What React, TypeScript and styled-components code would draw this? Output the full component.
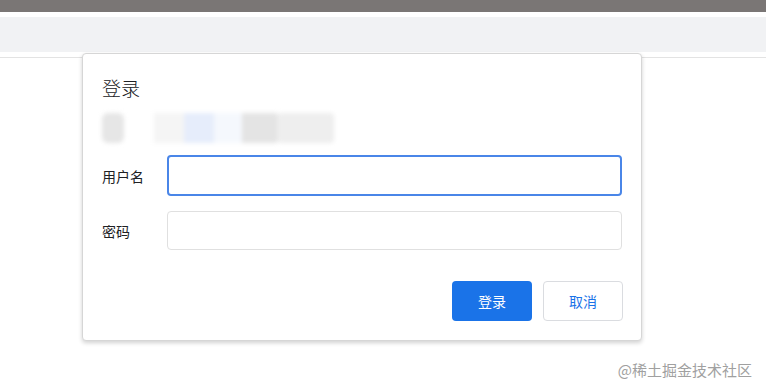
import React from "react";
import styled, { createGlobalStyle } from "styled-components";

const Global = createGlobalStyle`
  html, body { margin: 0; padding: 0; background: #fff; }
  body { font-family: "Microsoft YaHei", "Noto Sans CJK SC", "Liberation Sans", sans-serif; }
`;

const Page = styled.div`
  position: relative;
  width: 766px;
  height: 392px;
  overflow: hidden;
  background: #fff;
`;

const TopBar = styled.div`
  height: 12px;
  background: #7a7675;
`;

const Spacer = styled.div<{ h: number }>`
  height: ${(p) => p.h}px;
`;

const Band = styled.div`
  height: 35px;
  background: #f1f2f4;
`;

const Rule = styled.div`
  height: 1px;
  margin-top: 5px;
  background: #e3e3e3;
`;

const Dialog = styled.div`
  position: absolute;
  left: 82px;
  top: 53px;
  width: 560px;
  height: 288px;
  box-sizing: border-box;
  background: #fff;
  border-radius: 4px;
  border: 1px solid #d6d6d6;
  box-shadow: 0 2px 4px rgba(0, 0, 0, 0.18);
  padding: 22px 19px 0 19px;
  display: flex;
  flex-direction: column;
`;

const Title = styled.div`
  font-size: 19px;
  font-weight: 300;
  line-height: 24px;
  color: #202124;
`;

const BlurRow = styled.div`
  display: flex;
  height: 30px;
  margin-top: 13px;
  filter: blur(2px);
`;

const Blob = styled.div<{ w: number; c: string; r?: number }>`
  width: ${(p) => p.w}px;
  background: ${(p) => p.c};
  border-radius: ${(p) => p.r ?? 0}px;
`;

const Row = styled.div<{ mt: number }>`
  display: flex;
  align-items: center;
  margin-top: ${(p) => p.mt}px;
`;

const Label = styled.div`
  width: 65px;
  font-size: 14px;
  color: #202124;
`;

const Input = styled.div<{ focused?: boolean }>`
  width: 456px;
  height: ${(p) => (p.focused ? 41 : 39)}px;
  box-sizing: border-box;
  border-radius: 4px;
  border: ${(p) => (p.focused ? "2px solid #4a86e8" : "1px solid #e0e0e0")};
  background: #fff;
`;

const Actions = styled.div`
  display: flex;
  justify-content: flex-end;
  gap: 11px;
  margin-top: 31px;
  width: 521px;
`;

const Button = styled.div<{ primary?: boolean }>`
  width: 80px;
  height: 40px;
  box-sizing: border-box;
  border-radius: 4px;
  display: flex;
  align-items: center;
  justify-content: center;
  font-size: 14px;
  background: ${(p) => (p.primary ? "#1a73e8" : "#fff")};
  color: ${(p) => (p.primary ? "#fff" : "#1a73e8")};
  border: ${(p) => (p.primary ? "none" : "1px solid #dadce0")};
`;

const Watermark = styled.div`
  position: absolute;
  right: 14px;
  top: 360px;
  font-size: 15px;
  line-height: 20px;
  color: #a0a0a0;
`;

export default function App() {
  return (
    <Page>
      <Global />
      <TopBar />
      <Spacer h={5} />
      <Band />
      <Rule />
      <Dialog>
        <Title>登录</Title>
        <BlurRow>
          <Blob w={22} c="#e6e6e6" r={6} />
          <Blob w={30} c="#ffffff" />
          <Blob w={30} c="#f5f5f5" />
          <Blob w={30} c="#e6edfb" />
          <Blob w={28} c="#f5f8fd" />
          <Blob w={35} c="#e4e4e4" />
          <Blob w={57} c="#eeeeee" r={4} />
        </BlurRow>
        <Row mt={12}>
          <Label>用户名</Label>
          <Input focused />
        </Row>
        <Row mt={15}>
          <Label>密码</Label>
          <Input />
        </Row>
        <Actions>
          <Button primary>登录</Button>
          <Button>取消</Button>
        </Actions>
      </Dialog>
      <Watermark>@稀土掘金技术社区</Watermark>
    </Page>
  );
}
